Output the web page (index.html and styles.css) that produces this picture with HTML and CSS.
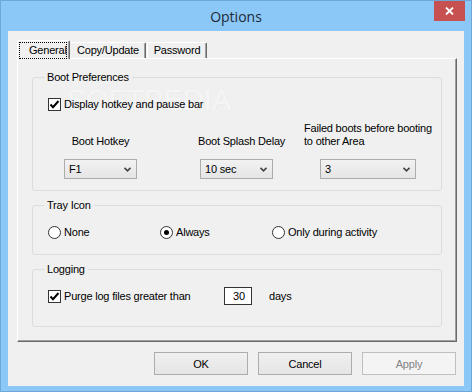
FILE: index.html
```html
<!DOCTYPE html>
<html lang="en">
<head>
    <meta charset="UTF-8">
    <title>Options</title>
    <link rel="stylesheet" href="styles.css">
</head>
<body>
    <div class="window">
        <div class="titlebar">
            <span class="title">Options</span>
            <button class="close" aria-label="Close">
                <svg width="9" height="8" viewBox="0 0 9 8"><path d="M1 0.5 L8 7.5 M8 0.5 L1 7.5" stroke="#fff" stroke-width="1.8"/></svg>
            </button>
        </div>
        <div class="client">
            <div class="tabs">
                <div class="tab active w-general"><span class="focus">General</span></div>
                <div class="tab w-copy">Copy/Update</div>
                <div class="tab w-pass">Password</div>
            </div>
            <div class="panel">
                <div class="watermark">SOFTPEDIA</div>
                <fieldset class="group boot">
                    <legend>Boot Preferences</legend>
                    <label class="check">
                        <span class="box"><svg width="11" height="11" viewBox="0 0 11 11"><path d="M1.5 5.5 L4 8.2 L9.5 2" fill="none" stroke="#000" stroke-width="2"/></svg></span>
                        Display hotkey and pause bar
                    </label>
                    <div class="boot-grid">
                        <div class="col col-hotkey">
                            <div class="cap">Boot Hotkey</div>
                            <div class="select w73">F1<svg width="7" height="5" viewBox="0 0 7 5"><path d="M0.5 0.8 L3.5 3.8 L6.5 0.8" fill="none" stroke="#444" stroke-width="1.6"/></svg></div>
                        </div>
                        <div class="col col-splash">
                            <div class="cap">Boot Splash Delay</div>
                            <div class="select w73">10 sec<svg width="7" height="5" viewBox="0 0 7 5"><path d="M0.5 0.8 L3.5 3.8 L6.5 0.8" fill="none" stroke="#444" stroke-width="1.6"/></svg></div>
                        </div>
                        <div class="col col-failed">
                            <div class="cap">Failed boots before booting<br>to other Area</div>
                            <div class="select w96">3<svg width="7" height="5" viewBox="0 0 7 5"><path d="M0.5 0.8 L3.5 3.8 L6.5 0.8" fill="none" stroke="#444" stroke-width="1.6"/></svg></div>
                        </div>
                    </div>
                </fieldset>
                <fieldset class="group tray">
                    <legend>Tray Icon</legend>
                    <div class="radios">
                        <label class="radio"><span class="dot"></span>None</label>
                        <label class="radio"><span class="dot on"></span>Always</label>
                        <label class="radio"><span class="dot"></span>Only during activity</label>
                    </div>
                </fieldset>
                <fieldset class="group logging">
                    <legend>Logging</legend>
                    <div class="log-row">
                        <label class="check purge">
                            <span class="box"><svg width="11" height="11" viewBox="0 0 11 11"><path d="M1.5 5.5 L4 8.2 L9.5 2" fill="none" stroke="#000" stroke-width="2"/></svg></span>
                            Purge log files greater than
                        </label>
                        <div class="num">30</div>
                        <span class="days">days</span>
                    </div>
                </fieldset>
            </div>
            <div class="buttons">
                <button class="btn">OK</button>
                <button class="btn">Cancel</button>
                <button class="btn disabled">Apply</button>
            </div>
        </div>
    </div>
</body>
</html>
```

FILE: styles.css
```css
body {
    margin: 0;
    font-family: "Liberation Sans", Arial, sans-serif;
    font-size: 11px;
    letter-spacing: -0.2px;
    color: #000;
}
.window {
    width: 472px;
    height: 392px;
    box-sizing: border-box;
    border: 1px solid #6fa6d6;
    background: #8bc7f7;
    display: flex;
    flex-direction: column;
}
.titlebar {
    height: 30px;
    position: relative;
    display: flex;
    justify-content: center;
    align-items: center;
}
.title {
    font-family: "Open Sans", "Noto Sans", sans-serif;
    font-size: 14px;
    letter-spacing: 0;
    color: #1d2a36;
    padding-top: 1px;
}
.close {
    position: absolute;
    right: 6px;
    top: 0;
    width: 31px;
    height: 20px;
    background: #c75050;
    border: none;
    padding: 0;
    display: flex;
    justify-content: center;
    align-items: center;
}
.client {
    flex: 1;
    margin: 0 7px 5px;
    background: #f0f0f0;
    padding: 9px 7px 0 9px;
}
.tabs {
    display: flex;
    height: 18px;
}
.tab {
    box-sizing: border-box;
    height: 16px;
    margin-top: 2px;
    border-top: 1px solid #fff;
    border-left: 1px solid #fff;
    border-right: 1px solid #696969;
    box-shadow: inset -1px 0 #a0a0a0;
    border-radius: 2px 2px 0 0;
    text-align: center;
    line-height: 14px;
}
.tab.active {
    height: 19px;
    margin-top: 0;
    position: relative;
    z-index: 1;
    background: #f0f0f0;
    padding: 1px 2px 0 1px;
    text-align: left;
}
.focus {
    display: block;
    outline: 1px dotted #000;
    outline-offset: -1px;
    height: 17px;
    line-height: 17px;
    padding-left: 10px;
}
.w-general { width: 53px; }
.w-copy { width: 76px; border-left-color: transparent; }
.w-pass { width: 60px; margin-left: 1px; }
.panel {
    position: relative;
    box-sizing: border-box;
    width: 440px;
    height: 284px;
    border: 1px solid #fff;
    border-right-color: #696969;
    border-bottom-color: #696969;
    box-shadow: inset -1px -1px #a0a0a0;
    padding: 11px 14px 0 14px;
}
.watermark {
    position: absolute;
    left: 49px;
    top: 25px;
    font-size: 29px;
    letter-spacing: 0;
    color: #f5f5f5;
    text-shadow: 1px 1px 0 #ececec;
}
.group {
    position: relative;
    margin: 0;
    min-width: 0;
    border: 1px solid #dcdcdc;
    border-radius: 3px;
    padding: 13px 15px 11px 15px;
}
.group + .group {
    margin-top: 7px;
}
.group legend {
    padding: 0 3px;
    margin-left: -4px;
    line-height: 14px;
}
.check {
    display: flex;
    align-items: center;
    gap: 3px;
    height: 14px;
}
.box {
    box-sizing: border-box;
    width: 13px;
    height: 13px;
    border: 1px solid #333;
    background: #fff;
    display: flex;
}
.boot-grid {
    display: grid;
    grid-template-columns: 150px 106px 1fr;
    margin-top: 11px;
}
.col {
    display: flex;
    flex-direction: column;
}
.cap {
    height: 26px;
    line-height: 13px;
    display: flex;
    align-items: flex-end;
    margin-bottom: 11px;
    white-space: nowrap;
}
.col-hotkey .cap {
    width: 73px;
    margin-left: 16px;
    justify-content: center;
}
.col-hotkey .select { margin-left: 16px; }
.col-splash .select { margin-left: 2px; }
.col-failed .select { margin-left: 16px; }
.select {
    box-sizing: border-box;
    height: 20px;
    border: 1px solid #acacac;
    background: linear-gradient(#f2f2f2, #e5e5e5);
    display: flex;
    align-items: center;
    justify-content: space-between;
    padding: 0 5px 0 4px;
}
.w73 { width: 73px; }
.w96 { width: 96px; }
.tray {
    padding-bottom: 15px;
}
.radios {
    display: grid;
    grid-template-columns: 112px 112px 1fr;
    height: 14px;
}
.radio {
    display: flex;
    align-items: center;
    gap: 3px;
}
.dot {
    box-sizing: border-box;
    width: 13px;
    height: 13px;
    border: 1px solid #333;
    border-radius: 50%;
    background: #fff;
    display: flex;
    justify-content: center;
    align-items: center;
}
.dot.on::after {
    content: "";
    width: 5px;
    height: 5px;
    border-radius: 50%;
    background: #000;
}
.logging {
    padding-top: 11px;
    padding-bottom: 21px;
}
.log-row {
    display: flex;
    align-items: center;
    height: 18px;
}
.purge {
    width: 176px;
}
.num {
    box-sizing: border-box;
    width: 28px;
    height: 18px;
    border: 1px solid #333;
    background: #fff;
    text-align: center;
    line-height: 16px;
    padding-left: 2px;
}
.days {
    margin-left: 17px;
}
.buttons {
    display: flex;
    justify-content: flex-end;
    gap: 10px;
    margin-top: 10px;
    padding-right: 1px;
}
.btn {
    box-sizing: border-box;
    width: 94px;
    height: 23px;
    border: 1px solid #acacac;
    background: linear-gradient(#f0f0f0, #e5e5e5);
    font-family: "Liberation Sans", Arial, sans-serif;
    font-size: 11px;
    letter-spacing: -0.2px;
    color: #000;
    padding: 0;
}
.btn.disabled {
    border-color: #bfbfbf;
    background: #f4f4f4;
    color: #838383;
}
```
